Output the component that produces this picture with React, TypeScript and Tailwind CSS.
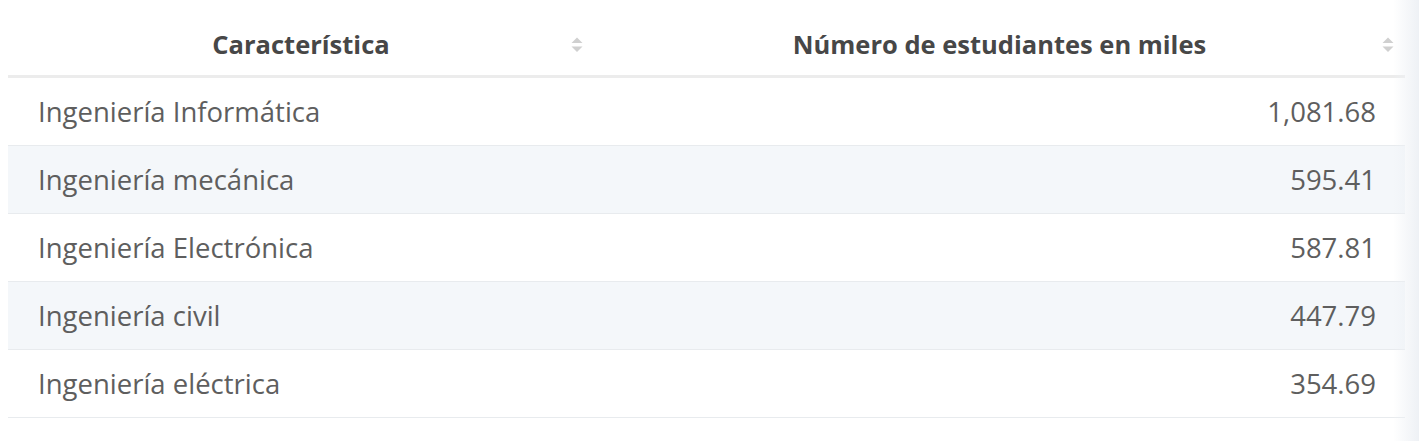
const rows = [
  { name: 'Ingeniería Informática', value: '1,081.68' },
  { name: 'Ingeniería mecánica', value: '595.41' },
  { name: 'Ingeniería Electrónica', value: '587.81' },
  { name: 'Ingeniería civil', value: '447.79' },
  { name: 'Ingeniería eléctrica', value: '354.69' },
]

const SortIcon = () => (
  <svg width="12" height="16" viewBox="0 0 12 16" className="shrink-0" fill="#d0d0d0">
    <path d="M6 0.5 L11.5 6 L0.5 6 Z" />
    <path d="M6 15 L11.5 9.5 L0.5 9.5 Z" />
  </svg>
)

const HeaderCell = ({ label }: { label: string }) => (
  <div className="relative flex h-[75px] items-center justify-center pt-[13px]">
    <span>{label}</span>
    <span className="absolute right-[11px] top-[37px]">
      <SortIcon />
    </span>
  </div>
)

const App = () => {
  return (
    <div className="relative h-[441px] w-[1419px] overflow-hidden bg-white font-['Open_Sans',sans-serif]">
      <div className="ml-2 w-[1397px]">
        {/* cabecera */}
        <div className="grid grid-cols-[586px_811px] border-b-[3px] border-[#ececec] text-[25.5px] font-bold text-[#474747]">
          <HeaderCell label="Característica" />
          <HeaderCell label="Número de estudiantes en miles" />
        </div>

        {/* filas */}
        {rows.map((r, i) => (
          <div
            key={r.name}
            className={`flex h-[68px] items-center justify-between border-b border-[#e8ebee] pl-[30px] pr-[29px] text-[27.5px] text-[#5e5e5e] ${
              i % 2 === 1 ? 'bg-[#f4f7fa]' : 'bg-white'
            }`}
          >
            <span>{r.name}</span>
            <span>{r.value}</span>
          </div>
        ))}
      </div>

      {/* sombra de scroll */}
      <div className="pointer-events-none absolute inset-y-0 right-0 w-[26px] bg-gradient-to-r from-white/0 to-[#eef1f5]" />
    </div>
  )
}

export default App
